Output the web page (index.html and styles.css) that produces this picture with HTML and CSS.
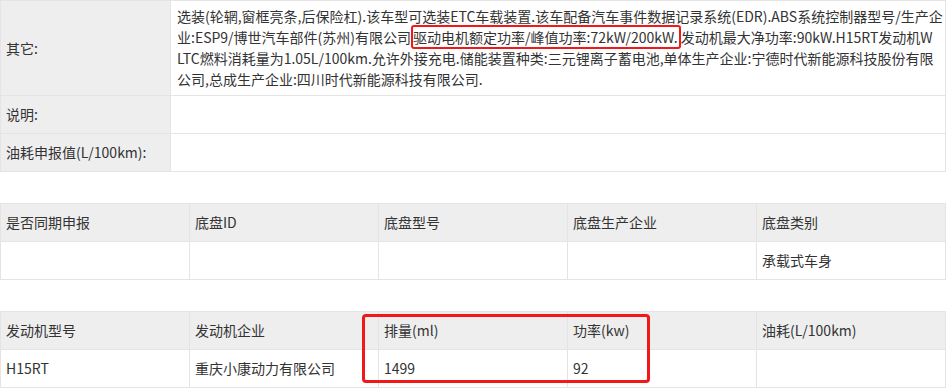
FILE: index.html
```html
<!DOCTYPE html>
<html lang="zh-CN">
<head>
<meta charset="utf-8">
<link rel="stylesheet" href="styles.css">
</head>
<body>
<table class="info">
  <colgroup><col class="c-label"><col></colgroup>
  <tr>
    <th class="label">其它:</th>
    <td class="value long">选装(轮辋,窗框亮条,后保险杠).该车型可选装ETC车载装置.该车配备汽车事件数据记录系统(EDR).ABS系统控制器型号/生产企<br>业:ESP9/博世汽车部件(苏州)有限公司<span class="mark">驱动电机额定功率/峰值功率:72kW/200kW.</span>发动机最大净功率:90kW.H15RT发动机W<br>LTC燃料消耗量为1.05L/100km.允许外接充电.储能装置种类:三元锂离子蓄电池,单体生产企业:宁德时代新能源科技股份有限<br>公司,总成生产企业:四川时代新能源科技有限公司.</td>
  </tr>
  <tr>
    <th class="label">说明:</th>
    <td class="value"></td>
  </tr>
  <tr>
    <th class="label">油耗申报值(L/100km):</th>
    <td class="value"></td>
  </tr>
</table>

<table class="grid">
  <tr class="head">
    <th>是否同期申报</th><th>底盘ID</th><th>底盘型号</th><th>底盘生产企业</th><th>底盘类别</th>
  </tr>
  <tr>
    <td></td><td></td><td></td><td></td><td>承载式车身</td>
  </tr>
</table>

<div class="engine">
  <table class="grid">
    <tr class="head">
      <th>发动机型号</th><th>发动机企业</th><th>排量(ml)</th><th>功率(kw)</th><th>油耗(L/100km)</th>
    </tr>
    <tr>
      <td>H15RT</td><td>重庆小康动力有限公司</td><td>1499</td><td>92</td><td></td>
    </tr>
  </table>
  <div class="highlight"></div>
</div>
</body>
</html>
```

FILE: styles.css
```css
html, body {
  margin: 0;
  padding: 0;
  background: #fff;
}
body {
  font-family: "Noto Sans CJK SC", "Noto Sans", sans-serif;
  font-size: 14px;
  color: #333;
}
table {
  border-collapse: collapse;
  table-layout: fixed;
  width: 946px;
}
th, td {
  border: 1px solid #e4e4e4;
  font-weight: normal;
  text-align: left;
  line-height: 21px;
  padding: 8px 5px;
  vertical-align: middle;
}
.c-label {
  width: 170px;
}
.label {
  background: #eeeeee;
}
.value {
  height: 21px;
}
.value.long {
  padding: 5px 6px 5px 6px;
  white-space: nowrap;
}
.mark {
  border: 2px solid #f21818;
  border-radius: 3px;
  padding: 0 1px 0 0;
}
.grid {
  margin-top: 31px;
}
.grid .head th {
  background: #eeeeee;
}
.grid td {
  height: 21px;
}
.engine {
  position: relative;
}
.highlight {
  position: absolute;
  left: 362px;
  top: 3px;
  width: 282px;
  height: 63px;
  border: 3px solid #f21818;
  border-radius: 4px;
  pointer-events: none;
}
```
